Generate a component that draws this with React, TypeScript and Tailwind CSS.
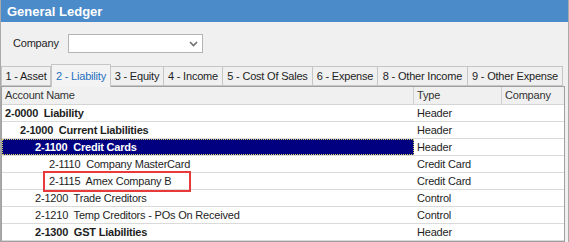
import React from 'react';

const tabs = [
  { label: '1 - Asset', w: 'w-[50px]' },
  { label: '2 - Liability', w: 'w-[60px]', active: true },
  { label: '3 - Equity', w: 'w-[53px]' },
  { label: '4 - Income', w: 'w-[59px]' },
  { label: '5 - Cost Of Sales', w: 'w-[90px]' },
  { label: '6 - Expense', w: 'w-[65px]' },
  { label: '8 - Other Income', w: 'w-[90px]' },
  { label: '9 - Other Expense', w: 'w-[95px]' },
];

// level -> left padding of the account name
const indent = ['pl-[3px]', 'pl-[18px]', 'pl-[33px]', 'pl-[47px]'];

const rows = [
  { code: '2-0000', name: 'Liability', type: 'Header', level: 0, bold: true },
  { code: '2-1000', name: 'Current Liabilities', type: 'Header', level: 1, bold: true },
  { code: '2-1100', name: 'Credit Cards', type: 'Header', level: 2, bold: true, selected: true },
  { code: '2-1110', name: 'Company MasterCard', type: 'Credit Card', level: 3 },
  { code: '2-1115', name: 'Amex Company B', type: 'Credit Card', level: 3, boxed: true },
  { code: '2-1200', name: 'Trade Creditors', type: 'Control', level: 2 },
  { code: '2-1210', name: 'Temp Creditors - POs On Received', type: 'Control', level: 2 },
  { code: '2-1300', name: 'GST Liabilities', type: 'Header', level: 2, bold: true },
];

const App: React.FC = () => {
  return (
    <div
      className="w-[569px] h-[242px] bg-[#f0f0f0] border-x border-[#a9a9a9] flex flex-col overflow-hidden text-[11px] tracking-[-0.2px] text-[#1e1e1e]"
      style={{ fontFamily: '"Liberation Sans", Arial, sans-serif' }}
    >
      {/* Title bar */}
      <div className="h-[22px] bg-[#4b8bca] flex items-center pl-[6px] shrink-0">
        <span className="text-white font-bold text-[13px] tracking-normal leading-none">General Ledger</span>
      </div>

      {/* Company filter */}
      <div className="h-[42px] flex items-center pl-[12px] gap-[9px] shrink-0 pt-[1px]">
        <span>Company</span>
        <div className="w-[135px] h-[19px] bg-white border border-[#b4b4b4] flex items-center justify-end pr-[4px]">
          <svg width="9" height="6" viewBox="0 0 9 6">
            <path d="M1 1 L4.5 4.5 L8 1" fill="none" stroke="#707070" strokeWidth="1.6" />
          </svg>
        </div>
      </div>

      {/* Tabs */}
      <div className="h-[22px] flex items-end shrink-0">
        {tabs.map((t) =>
          t.active ? (
            <div
              key={t.label}
              className={`${t.w} h-[23px] -mb-px border border-b-0 border-[#c6c6c6] bg-[#f3f3f3] text-[#1f6fc0] flex items-center justify-center relative z-10`}
            >
              {t.label}
            </div>
          ) : (
            <div
              key={t.label}
              className={`${t.w} h-[20px] border border-l-0 first:border-l border-[#c6c6c6] flex items-center justify-center`}
            >
              {t.label}
            </div>
          )
        )}
      </div>

      {/* Grid */}
      <div className="w-[564px] flex-1 border border-[#a0a0a0] bg-white flex flex-col">
        <div className="h-[18px] flex bg-[#f0f0f0] border-b border-[#d5d5d5] text-[#333] shrink-0">
          <div className="w-[412px] pl-[3px] flex items-center border-r border-[#d0d0d0]">Account Name</div>
          <div className="w-[88px] pl-[3px] flex items-center border-r border-[#d0d0d0]">Type</div>
          <div className="flex-1 pl-[3px] flex items-center">Company</div>
        </div>
        {rows.map((r) => (
          <div key={r.code} className="h-[17px] flex border-b border-[#dadada] shrink-0">
            <div className="w-[412px] flex items-center">
              <div
                className={`h-[16px] flex items-center ${indent[r.level]} ${
                  r.selected
                    ? 'w-full bg-[#000080] text-white outline-1 outline-dotted outline-[#d8c860] -outline-offset-1'
                    : ''
                } ${r.bold ? 'font-bold' : ''}`}
              >
                <span
                  className={`whitespace-pre ${
                    r.boxed ? 'border-2 border-[#e8393b] -ml-[6px] pl-[4px] pr-[18px] h-[21px] flex items-center' : ''
                  }`}
                >
                  {r.code}  {r.name}
                </span>
              </div>
            </div>
            <div className="w-[88px] pl-[3px] flex items-center">{r.type}</div>
            <div className="flex-1" />
          </div>
        ))}
      </div>
    </div>
  );
};

export default App;
